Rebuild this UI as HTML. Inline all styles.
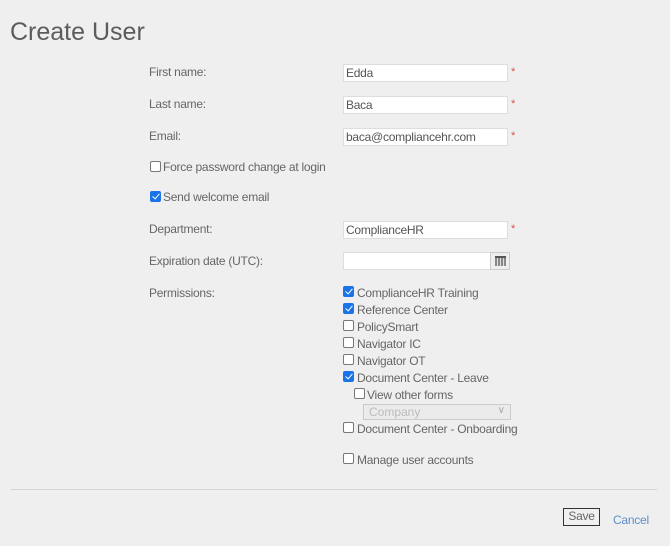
<!DOCTYPE html>
<html><head><style>
body{margin:0;width:670px;height:546px;background:#efefef;font-family:"Liberation Sans",sans-serif;color:#666;position:relative;overflow:hidden}
.a{position:absolute;white-space:nowrap}
.t{font-size:12px;line-height:14px;letter-spacing:-0.25px}
h1{position:absolute;left:10px;top:18px;margin:0;font-weight:normal;font-size:25px;color:#5c5c5c}
.in{position:absolute;left:343px;background:#fff;border:1px solid #ddd;font-size:12px;line-height:16px;color:#555;padding-left:2px;box-sizing:border-box;width:165px;height:18px;letter-spacing:-0.25px}
.st{position:absolute;left:511px;color:#d9534f;font-size:11px}
.cb{position:absolute;width:9px;height:9px;border:1px solid #777;border-radius:2px;background:#fff}
.cb.on{background:#1a73e8;border-color:#1a73e8}
.cb.on:after{content:"";position:absolute;left:2.5px;top:0px;width:3px;height:6px;border:solid #fff;border-width:0 1.6px 1.6px 0;transform:rotate(40deg)}
</style></head><body>
<h1>Create User</h1>
<div class="a t" style="left:149px;top:65px">First name:</div>
<div class="in" style="top:64px">Edda</div><div class="st" style="top:66px">*</div>
<div class="a t" style="left:149px;top:97px">Last name:</div>
<div class="in" style="top:96px">Baca</div><div class="st" style="top:98px">*</div>
<div class="a t" style="left:149px;top:129px">Email:</div>
<div class="in" style="top:128px">baca@compliancehr.com</div><div class="st" style="top:130px">*</div>
<div class="cb" style="left:150px;top:161px"></div><div class="a t" style="left:163px;top:160px">Force password change at login</div>
<div class="cb on" style="left:150px;top:191px"></div><div class="a t" style="left:163px;top:190px">Send welcome email</div>
<div class="a t" style="left:149px;top:222px">Department:</div>
<div class="in" style="top:221px">ComplianceHR</div><div class="st" style="top:223px">*</div>
<div class="a t" style="left:149px;top:254px">Expiration date (UTC):</div>
<div class="in" style="top:252px;width:148px"></div>
<div class="a" style="left:490px;top:252px;width:20px;height:18px;background:#eee;border:1px solid #ccc;box-sizing:border-box"><div style="position:absolute;left:4px;top:3px;width:11px;height:10px;background:#888;border-top:2px solid #555;box-sizing:border-box;background-image:repeating-linear-gradient(90deg,transparent 0 2px,#ddd 2px 3px)"></div></div>
<div class="a t" style="left:149px;top:286px">Permissions:</div>
<div class="cb on" style="left:343px;top:286px"></div><div class="a t" style="left:357px;top:286px">ComplianceHR Training</div>
<div class="cb on" style="left:343px;top:303px"></div><div class="a t" style="left:357px;top:303px">Reference Center</div>
<div class="cb" style="left:343px;top:320px"></div><div class="a t" style="left:357px;top:320px">PolicySmart</div>
<div class="cb" style="left:343px;top:337px"></div><div class="a t" style="left:357px;top:337px">Navigator IC</div>
<div class="cb" style="left:343px;top:354px"></div><div class="a t" style="left:357px;top:354px">Navigator OT</div>
<div class="cb on" style="left:343px;top:371px"></div><div class="a t" style="left:357px;top:371px">Document Center - Leave</div>
<div class="cb" style="left:354px;top:388px"></div><div class="a t" style="left:367px;top:388px">View other forms</div>
<div class="a" style="left:363px;top:404px;width:148px;height:16px;border:1px solid #ccc;box-sizing:border-box;background:#ebebeb;font-size:12px;color:#bbb;line-height:14px;padding-left:5px">Company<span style="position:absolute;right:5px;top:-1px;color:#aaa;font-size:10px">&#x2228;</span></div>
<div class="cb" style="left:343px;top:422px"></div><div class="a t" style="left:357px;top:422px">Document Center - Onboarding</div>
<div class="cb" style="left:343px;top:453px"></div><div class="a t" style="left:357px;top:453px">Manage user accounts</div>
<div class="a" style="left:11px;top:489px;width:646px;height:1px;background:#d5d5d5"></div>
<div class="a t" style="left:563px;top:508px;width:37px;height:18px;border:1px solid #333;box-sizing:border-box;text-align:center;line-height:15px;background:#f0f0f0">Save</div>
<div class="a t" style="left:613px;top:513px;color:#5b8fc9">Cancel</div>
</body></html>
